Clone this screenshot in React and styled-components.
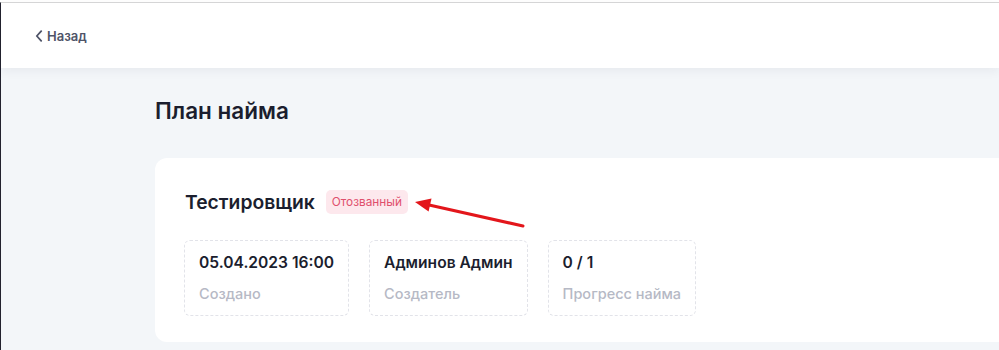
import React from "react";
import styled, { createGlobalStyle } from "styled-components";

const GlobalStyle = createGlobalStyle`
  html, body {
    margin: 0;
    padding: 0;
    background: #ffffff;
    overflow: hidden;
  }
  body {
    font-family: Inter, "Noto Sans", "Liberation Sans", sans-serif;
  }
`;

const Frame = styled.div`
  margin-top: 2px;
  height: 348px;
  border-top: 1px solid #d8d8d8;
  border-left: 1px solid #22222e;
  display: flex;
  flex-direction: column;
  background: #f3f6f9;
`;

const Header = styled.header`
  height: 65px;
  flex-shrink: 0;
  background: #ffffff;
  display: flex;
  align-items: center;
  padding-left: 34px;
  box-shadow: 0 3px 10px rgba(30, 40, 60, 0.06);
  position: relative;
  z-index: 1;
`;

const BackLink = styled.a`
  display: flex;
  align-items: center;
  gap: 4px;
  font-size: 13px;
  font-weight: 600;
  color: #4f5468;
  text-decoration: none;
  cursor: pointer;

  svg {
    width: 8px;
    height: 12px;
  }
`;

const Main = styled.main`
  flex: 1;
  padding: 29px 0 0 154px;
`;

const Title = styled.h1`
  margin: 0 0 33px;
  font-size: 22.5px;
  line-height: 28px;
  font-weight: 600;
  color: #1b1e2e;
`;

const Card = styled.section`
  position: relative;
  background: #ffffff;
  border-radius: 12px;
  margin-right: -20px;
  padding: 32px 29px 26px;
`;

const TitleRow = styled.div`
  display: flex;
  align-items: center;
  gap: 11px;
  height: 24px;
  margin-bottom: 26px;
`;

const JobName = styled.h2`
  margin: 0 0 0 1px;
  font-size: 19.3px;
  font-weight: 600;
  color: #1b1e2e;
`;

const Badge = styled.span`
  display: inline-flex;
  align-items: center;
  height: 24px;
  padding: 0 6px;
  border-radius: 5px;
  background: #fde8ed;
  color: #e04f6c;
  font-size: 11.8px;
  font-weight: 400;
`;

const Stats = styled.div`
  display: flex;
  gap: 20px;
`;

const StatBox = styled.div`
  display: flex;
  flex-direction: column;
  gap: 12px;
  padding: 12px 14px;
  border: 1px dashed #e2e3e9;
  border-radius: 6px;
`;

const StatValue = styled.div`
  font-size: 15.6px;
  line-height: 20px;
  font-weight: 600;
  color: #1b1e2e;
  white-space: nowrap;
`;

const StatLabel = styled.div`
  font-size: 14.5px;
  line-height: 18px;
  font-weight: 500;
  color: #b6b9c5;
  white-space: nowrap;
`;

const Arrow = styled.svg`
  position: absolute;
  left: 255px;
  top: 36px;
  width: 120px;
  height: 40px;
  pointer-events: none;
`;

const stats = [
  { value: "05.04.2023 16:00", label: "Создано" },
  { value: "Админов Админ", label: "Создатель" },
  { value: "0 / 1", label: "Прогресс найма" },
];

export default function App() {
  return (
    <>
      <GlobalStyle />
      <Frame>
        <Header>
          <BackLink>
            <svg viewBox="0 0 8 12" fill="none">
              <path
                d="M6.2 1.2L1.8 6l4.4 4.8"
                stroke="#4f5468"
                strokeWidth="1.8"
                strokeLinecap="round"
                strokeLinejoin="round"
              />
            </svg>
            Назад
          </BackLink>
        </Header>
        <Main>
          <Title>План найма</Title>
          <Card>
            <TitleRow>
              <JobName>Тестировщик</JobName>
              <Badge>Отозванный</Badge>
            </TitleRow>
            <Stats>
              {stats.map((s) => (
                <StatBox key={s.label}>
                  <StatValue>{s.value}</StatValue>
                  <StatLabel>{s.label}</StatLabel>
                </StatBox>
              ))}
            </Stats>
            <Arrow viewBox="0 0 120 40">
              <line
                x1="113"
                y1="32"
                x2="18"
                y2="10.8"
                stroke="#e3161b"
                strokeWidth="3"
                strokeLinecap="round"
              />
              <polygon points="5,8 21.5,4.6 18.6,17.6" fill="#e3161b" />
            </Arrow>
          </Card>
        </Main>
      </Frame>
    </>
  );
}
